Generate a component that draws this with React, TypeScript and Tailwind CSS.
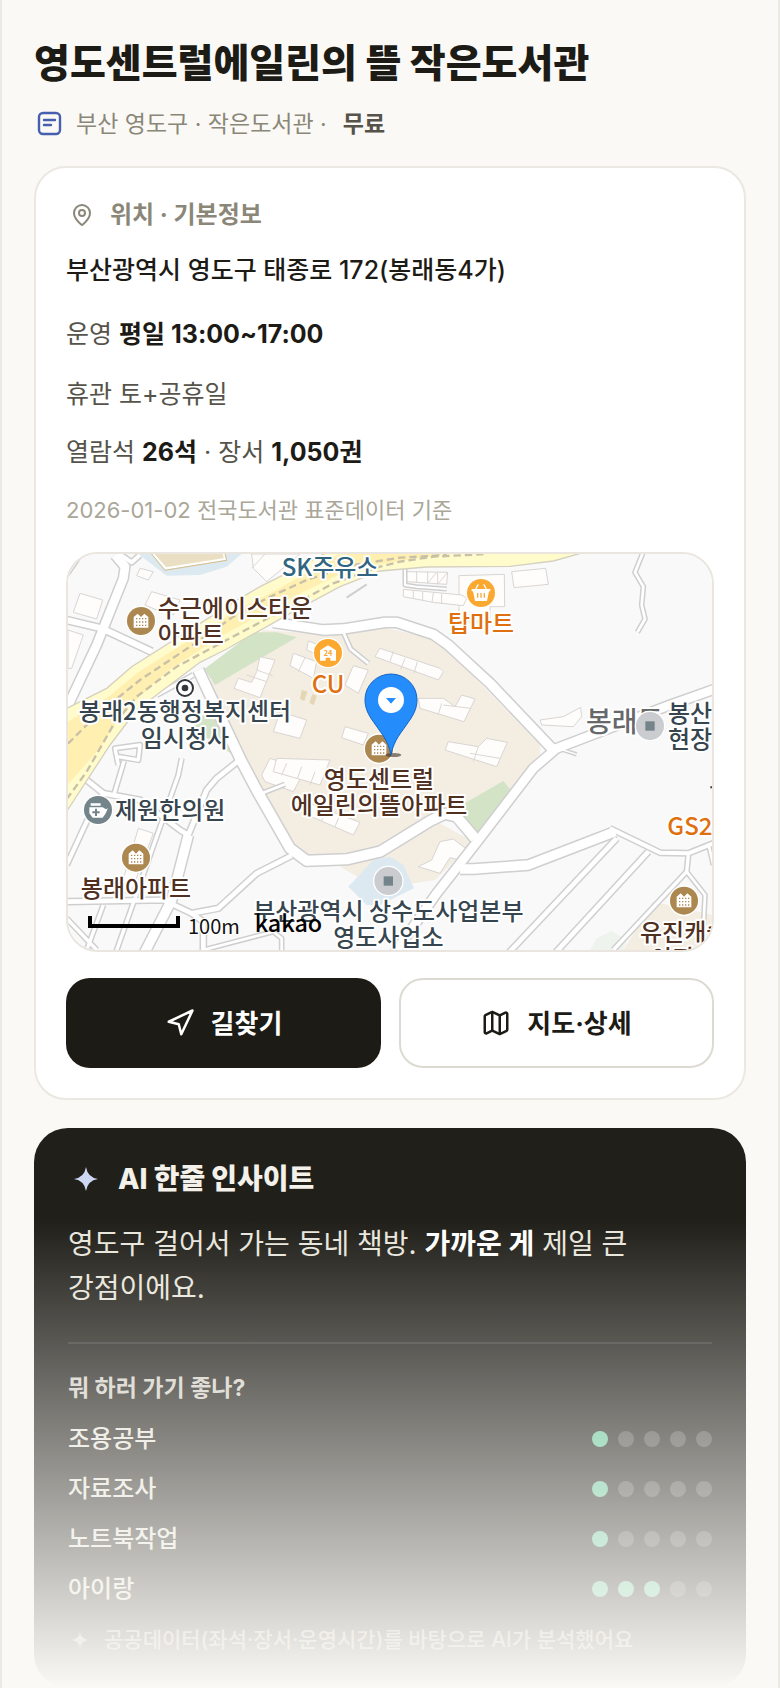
import React from "react";
import { Map as MapIcon, MapPin, Navigation } from "lucide-react";

type Road = { d: string; w: number };

const roads: Road[] = [
  { d: "M640 232 L790 255 L850 252 L975 232 L1010 232 L1120 268 L1165 300 L1290 415 L1475 610", w: 28 },
  { d: "M415 375 L450 450 L545 650 L590 735 L690 910 L740 947 L860 943 L960 920 L1110 828 L1155 806 L1190 815 L1245 880", w: 30 },
  { d: "M2000 420 L1830 480 L1490 610 L1420 670 L1240 905 L1130 1045 L1000 1230", w: 26 },
  { d: "M1200 972 L1240 972 L1405 960 L1600 885 L1665 860", w: 28 },
  { d: "M1650 850 L1800 923 L1885 925 L1960 895", w: 12 },
  { d: "M1670 880 L1340 1230", w: 14 },
  { d: "M1765 920 L1480 1230", w: 14 },
  { d: "M1885 930 L1880 980 L1660 1215", w: 10 },
  { d: "M1880 980 L1935 1050 L1930 1150 M1945 895 L1960 960", w: 8 },
  { d: "M1750 20 L1725 82 L1750 125 L1745 180 L1755 222 L1732 262", w: 8 },
  { d: "M850 262 L872 312 L925 355", w: 8 },
  { d: "M1035 68 L1035 120 L1070 125 L1160 132", w: 6 },
  { d: "M165 30 L195 65 L190 100 L110 300 L20 490", w: 26 },
  { d: "M175 25 L215 52 L240 30", w: 12 },
  { d: "M20 225 L125 250 L275 320", w: 18 },
  { d: "M20 90 L65 25", w: 8 },
  { d: "M290 450 L400 390 M365 640 L355 690 L165 1230", w: 10 },
  { d: "M175 660 L165 610 L240 600 L235 645 L175 635 M192 648 L160 755", w: 10 },
  { d: "M80 705 L130 745 L240 765 L360 855 L385 870 L440 735 L470 700 L535 648", w: 14 },
  { d: "M130 745 L80 830 L20 960", w: 12 },
  { d: "M385 870 L335 1065 L250 1230", w: 28 },
  { d: "M20 1070 L310 1065 L395 1105 L475 1090 L590 985 L695 932", w: 14 },
  { d: "M395 1105 L430 1130 L430 1215", w: 14 },
  { d: "M430 1215 L640 1160 L665 1180 L665 1225", w: 8 },
  { d: "M130 1080 L80 1215 M20 1120 L110 1215", w: 10 },
  { d: "M600 747 L675 718", w: 8 },
  { d: "M1500 612 L1550 628", w: 4 },
];

const buildings = [
  "M60 145 L128 165 L110 222 L40 202Z",
  "M24 255 L70 270 L35 370 L24 370Z",
  "M240 70 L280 80 L265 105 L230 92Z",
  "M275 140 L360 165 L340 210 L290 195 L255 180Z",
  "M575 27 L720 27 L620 110 L580 70Z",
  "M600 335 L645 345 L600 458 L522 430 L535 400 L575 412 L590 380Z",
  "M700 325 L770 350 L760 400 L690 362Z",
  "M745 288 L790 305 L775 330 L740 315Z",
  "M960 310 L1140 370 L1150 380 L1135 405 L945 335Z",
  "M880 362 L925 375 L895 445 L855 420Z",
  "M660 500 L740 525 L720 580 L640 560Z",
  "M855 545 L925 565 L910 600 L845 578Z",
  "M605 690 L630 640 L735 675 L700 740 L615 710Z",
  "M650 640 L810 645 L780 720 L640 680Z",
  "M735 770 L900 832 L880 870 L720 800Z",
  "M1075 460 L1150 460 L1185 485 L1205 450 L1245 462 L1212 530 L1080 490Z",
  "M1165 590 L1255 605 L1280 580 L1342 592 L1310 665 L1155 615Z",
  "M1115 945 L1140 890 L1180 882 L1223 915 L1200 945 L1170 938 L1140 985 L1075 965Z",
  "M1355 80 L1457 70 L1465 118 L1362 128Z",
  "M1197 92 L1333 88 L1334 185 L1290 185 L1290 230 L1197 230Z",
  "M1040 80 L1163 82 L1160 118 L1040 110Z",
  "M1030 133 L1205 150 L1220 160 L1210 182 L1120 172 L1030 155Z",
  "M1440 525 L1510 515 L1562 487 L1565 515 L1540 545 L1445 540Z",
  "M235 850 L280 865 L210 1050 L180 1035Z",
];

type LabelProps = { x: number; y: number; color: string; size?: number; middle?: boolean; children: string };

function Label({ x, y, color, size = 72, middle = false, children }: LabelProps) {
  return (
    <text
      x={x}
      y={y}
      fill={color}
      fontSize={size}
      fontWeight={500}
      textAnchor={middle ? "middle" : "start"}
      stroke="#ffffff"
      strokeWidth={12}
      strokeLinejoin="round"
      paintOrder="stroke"
    >
      {children}
    </text>
  );
}

function Poi({ x, y, color, children }: { x: number; y: number; color: string; children?: React.ReactNode }) {
  return (
    <g transform={`translate(${x} ${y})`}>
      <circle r={46} fill="#fff" />
      <circle r={42} fill={color} />
      {children}
    </g>
  );
}

function Apartment({ x, y }: { x: number; y: number }) {
  return (
    <Poi x={x} y={y} color="#ad8750">
      <path d="M-22 20 V-12 L-10 -22 L0 -12 L10 -22 L22 -12 V20Z" fill="#fff" />
      <path d="M-15 -7 H17 M-15 3 H17 M-15 13 H17" stroke="#ad8750" strokeWidth={4} strokeDasharray="4 5" />
    </Poi>
  );
}

function LibraryMap() {
  const brown = "#50301f";
  const slate = "#36454e";
  return (
    <svg
      viewBox="24 27 1932 1188"
      preserveAspectRatio="xMidYMid slice"
      className="block h-full w-full font-['Noto_Sans_CJK_KR',sans-serif]"
      role="img"
      aria-label="도서관 주변 지도"
    >
      <rect x={0} y={0} width={2000} height={1250} fill="#f9f9f9" />
      <path d="M235 27 L545 27 L500 65 L420 90 L320 92Z" fill="#dde9f1" />
      <path d="M275 22 L490 22 L495 42 L318 70Z" fill="#eadfc2" stroke="#fff" strokeWidth={6} />
      <path d="M271 22 L314 76 L500 46 L494 22" fill="none" stroke="#d8bd8a" strokeWidth={3} />
      <path
        d="M610 255 L790 268 L975 248 L1110 280 L1170 320 L1440 600 L1440 640 L1240 880 L1170 820 L1110 835 L960 925 L740 948 L690 920 L540 630 L440 420Z"
        fill="#f3ede2"
      />
      <path d="M840 965 L960 935 L1130 830 L1240 890 L1125 1005 L1060 1015 L900 1000Z" fill="#f3ede2" />
      <path d="M865 1025 L940 945 L990 935 L1030 960 L1062 1030 L960 1080 L920 1080Z" fill="#dde9f1" />
      <path d="M465 420 L433 372 L580 262 L650 262 L710 277Z" fill="#d3e3c6" />
      <path d="M395 550 L430 510 L465 525 L520 630Z" fill="#d3e3c6" />
      <path d="M1170 800 L1330 708 L1352 735 L1250 872Z" fill="#d3e3c6" />
      <path d="M1590 1215 L1610 1180 L1655 1158 L1700 1185 L1690 1215Z" fill="#eef3ed" />
      <path d="M1780 1070 L1960 1110 L1960 1215 L1690 1215Z" fill="#f3ede2" />
      <path d="M725 435 L742 440 L733 468 L720 462Z M757 447 L770 452 L762 480 L748 474Z" fill="#e5d7b4" />
      <g fill="#fefdfc" stroke="#d9d5d2" strokeWidth={3}>
        {buildings.map((d) => (
          <path key={d} d={d} />
        ))}
      </g>
      <path
        d="M560 390 L620 410 M590 375 L638 392 M735 338 L715 380 M1000 318 L990 350 M1035 340 L1022 372 M1072 350 L1062 385 M1150 480 L1232 490 M1145 475 L1135 508 M680 655 L665 690 M725 665 L712 702 M765 680 L750 720 M840 808 L825 845 M800 790 L785 828 M1230 625 L1320 640 M1255 605 L1240 650 M1070 80 L1070 112 M1103 80 L1103 115 M1130 82 L1103 115 M1133 82 L1133 118 M1163 82 L1133 118 M1060 138 L1060 160 M1088 140 L1088 166 M1120 143 L1116 172 M1145 146 L1145 176 M615 27 L575 70"
        fill="none"
        stroke="#dad7d4"
        strokeWidth={3}
      />
      <g fill="none" stroke="#cfcfcf" strokeLinejoin="round">
        {roads.map((r) => (
          <path key={r.d} d={r.d} strokeWidth={r.w + 9} />
        ))}
      </g>
      <g fill="none" stroke="#ffffff" strokeLinejoin="round">
        {roads.map((r) => (
          <path key={r.d} d={r.d} strokeWidth={r.w} />
        ))}
      </g>
      <path d="M860 158 L920 118" stroke="#cfcfcf" strokeWidth={6} />
      <path
        d="M0 500 L140 430 L215 365 L520 172 L600 125 L720 65 L805 20 L1580 20 L1480 48 L1350 64 L1100 66 L960 78 L840 125 L700 200 L500 312 L420 352 L230 495 L150 600 L0 830Z"
        fill="#fffbcb"
        stroke="#d5d1c0"
        strokeWidth={4}
      />
      <path
        d="M0 545 L150 452 L230 385 L520 202 L640 140 L850 20 L1200 20 L960 58 L840 88 L700 155 L480 275 L320 380 L190 500 L120 610 L0 745Z"
        fill="#fff0b2"
      />
      <path
        d="M0 620 L110 510 L240 405 L420 285 L520 215 L620 160 L740 105 L880 60 L1020 38 L1160 30"
        fill="none"
        stroke="#c8c1a8"
        strokeWidth={7}
        strokeDasharray="22 12"
      />
      <path
        d="M0 790 L80 680 L160 540 L230 455 L350 365 L500 285 L680 190 L820 115 L960 65 L1020 50 L1120 35 L1280 27"
        fill="none"
        stroke="#c8c1a8"
        strokeWidth={7}
        strokeDasharray="22 12"
      />

      <Apartment x={243} y={228} />
      <Apartment x={228} y={938} />
      <Apartment x={957} y={611} />
      <Apartment x={1872} y={1067} />
      <Poi x={804} y={324} color="#fba830">
        <path d="M-24 23 V-8 L0 -23 L24 -8 V23 H7 V14 H-7 V23Z" fill="#fff" />
        <text x={0} y={8} textAnchor="middle" fontSize={22} fontWeight={700} fill="#fba830">
          24
        </text>
      </Poi>
      <Poi x={1263} y={144} color="#fba830">
        <path d="M-28 -12 H28 V-5 H24 L18 24 H-18 L-24 -5 H-28Z" fill="#fff" />
        <path d="M-16 -12 L-8 -26 M16 -12 L8 -26" stroke="#fff" strokeWidth={4} />
        <path d="M-10 0 V14 M0 0 V14 M10 0 V14" stroke="#fba830" strokeWidth={4} />
      </Poi>
      <Poi x={114} y={795} color="#74848b">
        <path d="M-26 -8 H14 L24 -2 L30 -5 L22 12 L14 23 H-16 L-26 10Z M-22 -20 H8 V-13 H-22Z" fill="#fff" />
        <path d="M-6 -4 V18 M-17 7 H5" stroke="#74848b" strokeWidth={6} />
      </Poi>
      <Poi x={985} y={1008} color="#caccd0">
        <rect x={-14} y={-14} width={28} height={28} fill="#74848b" />
      </Poi>
      <circle cx={375} cy={429} r={30} fill="#fff" />
      <circle cx={375} cy={429} r={24} fill="#fff" stroke="#32373c" strokeWidth={6} />
      <circle cx={375} cy={429} r={10} fill="#32373c" />

      <Label x={665} y={94} color="#2f6580">SK주유소</Label>
      <Label x={293} y={215} color={brown}>수근에이스타운</Label>
      <Label x={293} y={293} color={brown}>아파트</Label>
      <Label x={804} y={443} color="#e0700f" middle>CU</Label>
      <Label x={1263} y={260} color="#e0700f" middle>탑마트</Label>
      <Label x={375} y={526} color={slate} middle>봉래2동행정복지센터</Label>
      <Label x={375} y={605} color={slate} middle>임시청사</Label>
      <Label x={165} y={821} color={slate}>제원한의원</Label>
      <Label x={228} y={1055} color={brown} middle>봉래아파트</Label>
      <Label x={957} y={729} color={brown} middle>영도센트럴</Label>
      <Label x={957} y={808} color={brown} middle>에일린의뜰아파트</Label>
      <Label x={1578} y={560} color="#66686a" size={84}>봉래동</Label>
      <Poi x={1770} y={543} color="#caccd0">
        <rect x={-14} y={-14} width={28} height={28} fill="#74848b" />
      </Poi>
      <Label x={1824} y={531} color={slate}>봉산</Label>
      <Label x={1824} y={610} color={slate}>현장</Label>
      <Label x={1822} y={869} color="#e0700f">GS25</Label>
      <Label x={1740} y={1189} color={brown}>유진캐슬</Label>
      <Label x={1872} y={1266} color={brown} middle>아파트</Label>
      <Label x={985} y={1125} color={slate} middle>부산광역시 상수도사업본부</Label>
      <Label x={985} y={1204} color={slate} middle>영도사업소</Label>
      <path d="M1951 727 H1960" stroke={brown} strokeWidth={6} />

      <ellipse cx={1000} cy={630} rx={24} ry={6} fill="#3b3128" opacity={0.6} />
      <path
        d="M993 630 C985 585 960 560 940 530 C924 508 915 488 915 464 A78 77 0 0 1 1071 464 C1071 488 1062 508 1046 530 C1026 560 1001 585 993 630Z"
        fill="#258cfb"
        stroke="#1465c4"
        strokeWidth={3}
      />
      <circle cx={993} cy={465} r={39} fill="#fff" />
      <path d="M978 459 H1008 L993 476Z" fill="#258cfb" />

      <path d="M90 1113 V1143 H354 V1113" fill="none" stroke="#000" strokeWidth={12} />
      <text x={384} y={1167} fontSize={60} fill="#111" stroke="#fff" strokeWidth={6} paintOrder="stroke">
        100m
      </text>
      <text x={584} y={1161} fontSize={70} fontWeight={500} fill="#000">
        kakao
      </text>
    </svg>
  );
}

function Sparkle({ className }: { className: string }) {
  return (
    <svg viewBox="0 0 24 24" className={className} fill="currentColor" aria-hidden="true">
      <path d="M12 0 Q13.6 10.4 24 12 Q13.6 13.6 12 24 Q10.4 13.6 0 12 Q10.4 10.4 12 0Z" />
    </svg>
  );
}

const scores = [
  { name: "조용공부", value: 1 },
  { name: "자료조사", value: 1 },
  { name: "노트북작업", value: 1 },
  { name: "아이랑", value: 3 },
];

export default function App() {
  return (
    <main className="relative min-h-screen overflow-hidden border-x-2 border-[#ebeae4] bg-[#faf9f5] px-8 pt-8 font-['Inter','Noto_Sans_CJK_KR',sans-serif] text-[#1d1b16]">
      <h1 className="text-[39px] leading-[62px] font-extrabold">영도센트럴에일린의 뜰 작은도서관</h1>
      <p className="mt-3 flex items-center text-[23px] leading-9 text-[#8b8778]">
        <svg viewBox="0 0 30 30" className="mr-3 size-[30px]" fill="none" stroke="#4560ae" strokeWidth={2.4} strokeLinecap="round" aria-hidden="true">
          <rect x={5} y={4} width={21} height={21} rx={4} />
          <path d="M10 11 H21 M10 16 H17" />
        </svg>
        <span>부산 영도구 · 작은도서관 ·</span>
        <strong className="ml-4 font-bold text-[#56534a]">무료</strong>
      </p>

      <section className="mt-6 rounded-[32px] border-2 border-[#eae8e1] bg-white p-[30px]">
        <h2 className="flex items-center gap-4 text-2xl leading-[34px] font-bold text-[#8b8778]">
          <MapPin className="ml-1 size-6" strokeWidth={2} aria-hidden="true" />
          위치 · 기본정보
        </h2>
        <p className="mt-[18px] text-[25px] leading-10 font-medium">부산광역시 영도구 태종로 172(봉래동4가)</p>
        <p className="mt-6 text-[25px] leading-10 text-[#56534a]">
          운영 <strong className="font-bold text-[#1d1b16]">평일 13:00~17:00</strong>
        </p>
        <p className="mt-5 text-[25px] leading-10 text-[#56534a]">휴관 토+공휴일</p>
        <p className="mt-[18px] text-[25px] leading-10 text-[#56534a]">
          열람석 <strong className="font-bold text-[#1d1b16]">26석</strong> · 장서{" "}
          <strong className="font-bold text-[#1d1b16]">1,050권</strong>
        </p>
        <p className="mt-[18px] text-[22px] leading-10 text-[#aaa698]">2026-01-02 전국도서관 표준데이터 기준</p>
        <div className="mt-[22px] h-[400px] overflow-hidden rounded-[32px] border-2 border-[#eae6df]">
          <LibraryMap />
        </div>
        <div className="mt-[26px] grid grid-cols-2 gap-[18px]">
          <button type="button" className="flex h-[90px] items-center justify-center gap-4 rounded-3xl bg-[#1d1b16] text-[26px] font-bold text-white">
            <Navigation className="size-[30px]" strokeWidth={2} aria-hidden="true" />
            길찾기
          </button>
          <button type="button" className="flex h-[90px] items-center justify-center gap-4 rounded-3xl border-2 border-[#dcdad2] bg-white text-[26px] font-bold">
            <MapIcon className="size-[30px]" strokeWidth={2} aria-hidden="true" />
            지도·상세
          </button>
        </div>
      </section>

      <section className="mt-7 rounded-[34px] bg-[#201f1a] px-[34px] pt-7 pb-7 text-[#e8e5dc]">
        <h2 className="flex items-center text-[28px] leading-[46px] font-extrabold text-[#f3f1ea]">
          <Sparkle className="mr-5 ml-1.5 size-6 text-[#cdd7f3]" />
          AI 한줄 인사이트
        </h2>
        <p className="mt-5 text-[28px] leading-[44px] break-keep">
          영도구 걸어서 가는 동네 책방. <strong className="font-bold text-white">가까운 게</strong> 제일 큰 강점이에요.
        </p>
        <div className="mt-8 border-t-2 border-white/10 pt-6">
          <h3 className="text-[23px] leading-10 font-bold text-[#d3d0c6]">뭐 하러 가기 좋나?</h3>
          <ul className="mt-1.5">
            {scores.map((s) => (
              <li key={s.name} className="flex h-[50px] items-center justify-between text-2xl font-medium">
                {s.name}
                <span className="flex gap-2.5" role="img" aria-label={`5점 중 ${s.value}점`}>
                  {[0, 1, 2, 3, 4].map((i) => (
                    <span key={i} className={i < s.value ? "size-4 rounded-full bg-[#66c89c]" : "size-4 rounded-full bg-white/20"} />
                  ))}
                </span>
              </li>
            ))}
          </ul>
        </div>
        <p className="mt-1.5 flex items-center text-[21px] leading-10 font-medium text-[#aaa698]">
          <Sparkle className="mr-4 ml-1 size-4" />
          공공데이터(좌석·장서·운영시간)를 바탕으로 AI가 분석했어요
        </p>
      </section>
      <div className="pointer-events-none absolute -inset-x-0.5 bottom-0 h-[468px] bg-linear-to-b from-[#faf9f5]/0 to-[#faf9f5]" />
    </main>
  );
}
